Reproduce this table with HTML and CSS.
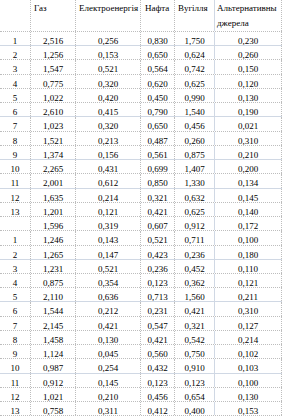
FILE: index.html
```html
<!DOCTYPE html>
<html>
<head>
<meta charset="utf-8">
<link rel="stylesheet" href="styles.css">
</head>
<body>
<div class="sheet">
  <div class="row head">
    <div class="c a"></div>
    <div class="c b h">Газ</div>
    <div class="c h">Електроенергія</div>
    <div class="c h hd">Нафта</div>
    <div class="c h">Вугілля</div>
    <div class="c f h">Альтернативны джерела</div>
  </div>
  <div class="row s"><div class="c a">1</div><div class="c b">2,516</div><div class="c">0,256</div><div class="c">0,830</div><div class="c">1,750</div><div class="c f">0,230</div></div>
  <div class="row"><div class="c a">2</div><div class="c b">1,256</div><div class="c">0,153</div><div class="c">0,650</div><div class="c">0,624</div><div class="c f">0,260</div></div>
  <div class="row"><div class="c a">3</div><div class="c b">1,547</div><div class="c">0,521</div><div class="c">0,564</div><div class="c">0,742</div><div class="c f">0,150</div></div>
  <div class="row"><div class="c a">4</div><div class="c b">0,775</div><div class="c">0,320</div><div class="c">0,620</div><div class="c">0,625</div><div class="c f">0,120</div></div>
  <div class="row"><div class="c a">5</div><div class="c b">1,022</div><div class="c">0,420</div><div class="c">0,450</div><div class="c">0,990</div><div class="c f">0,130</div></div>
  <div class="row s"><div class="c a">6</div><div class="c b">2,610</div><div class="c">0,415</div><div class="c">0,790</div><div class="c">1,540</div><div class="c f">0,190</div></div>
  <div class="row"><div class="c a">7</div><div class="c b">1,023</div><div class="c">0,320</div><div class="c">0,650</div><div class="c">0,456</div><div class="c f">0,021</div></div>
  <div class="row"><div class="c a">8</div><div class="c b">1,521</div><div class="c">0,213</div><div class="c">0,487</div><div class="c">0,260</div><div class="c f">0,310</div></div>
  <div class="row s"><div class="c a">9</div><div class="c b">1,374</div><div class="c">0,156</div><div class="c">0,561</div><div class="c">0,875</div><div class="c f">0,210</div></div>
  <div class="row"><div class="c a">10</div><div class="c b">2,265</div><div class="c">0,431</div><div class="c">0,699</div><div class="c">1,407</div><div class="c f">0,200</div></div>
  <div class="row s"><div class="c a">11</div><div class="c b">2,001</div><div class="c">0,612</div><div class="c">0,850</div><div class="c">1,330</div><div class="c f">0,134</div></div>
  <div class="row"><div class="c a">12</div><div class="c b">1,635</div><div class="c">0,214</div><div class="c">0,321</div><div class="c">0,632</div><div class="c f">0,145</div></div>
  <div class="row"><div class="c a">13</div><div class="c b">1,201</div><div class="c">0,121</div><div class="c">0,421</div><div class="c">0,625</div><div class="c f">0,140</div></div>
  <div class="row"><div class="c a"></div><div class="c b">1,596</div><div class="c">0,319</div><div class="c">0,607</div><div class="c">0,912</div><div class="c f">0,172</div></div>
  <div class="row"><div class="c a">1</div><div class="c b">1,246</div><div class="c">0,143</div><div class="c">0,521</div><div class="c">0,711</div><div class="c f">0,100</div></div>
  <div class="row s"><div class="c a">2</div><div class="c b">1,265</div><div class="c">0,147</div><div class="c">0,423</div><div class="c">0,236</div><div class="c f">0,180</div></div>
  <div class="row"><div class="c a">3</div><div class="c b">1,231</div><div class="c">0,521</div><div class="c">0,236</div><div class="c">0,452</div><div class="c f">0,110</div></div>
  <div class="row"><div class="c a">4</div><div class="c b">0,875</div><div class="c">0,354</div><div class="c">0,123</div><div class="c">0,362</div><div class="c f">0,121</div></div>
  <div class="row s"><div class="c a">5</div><div class="c b">2,110</div><div class="c">0,636</div><div class="c">0,713</div><div class="c">1,560</div><div class="c f">0,211</div></div>
  <div class="row"><div class="c a">6</div><div class="c b">1,544</div><div class="c">0,212</div><div class="c">0,231</div><div class="c">0,421</div><div class="c f">0,310</div></div>
  <div class="row"><div class="c a">7</div><div class="c b">2,145</div><div class="c">0,421</div><div class="c">0,547</div><div class="c">0,321</div><div class="c f">0,127</div></div>
  <div class="row"><div class="c a">8</div><div class="c b">1,458</div><div class="c">0,130</div><div class="c">0,421</div><div class="c">0,542</div><div class="c f">0,214</div></div>
  <div class="row"><div class="c a">9</div><div class="c b">1,124</div><div class="c">0,045</div><div class="c">0,560</div><div class="c">0,750</div><div class="c f">0,102</div></div>
  <div class="row s"><div class="c a">10</div><div class="c b">0,987</div><div class="c">0,254</div><div class="c">0,432</div><div class="c">0,910</div><div class="c f">0,103</div></div>
  <div class="row"><div class="c a">11</div><div class="c b">0,912</div><div class="c">0,145</div><div class="c">0,123</div><div class="c">0,123</div><div class="c f">0,100</div></div>
  <div class="row"><div class="c a">12</div><div class="c b">1,021</div><div class="c">0,210</div><div class="c">0,456</div><div class="c">0,654</div><div class="c f">0,130</div></div>
  <div class="row"><div class="c a">13</div><div class="c b">0,758</div><div class="c">0,311</div><div class="c">0,412</div><div class="c">0,400</div><div class="c f">0,153</div></div>
</div>
</body>
</html>
```

FILE: styles.css
```css
html, body {
  margin: 0;
  padding: 0;
  background: #ffffff;
}
body {
  font-family: "Liberation Serif", "Times New Roman", serif;
  font-size: 9px;
  color: #000000;
  overflow: hidden;
}
.sheet {
  display: flex;
  flex-direction: column;
  width: 282px;
}
.row {
  display: grid;
  grid-template-columns: 31px 45px 65px 34px 40px 67px;
  height: 14.24px;
  box-sizing: border-box;
  border-bottom: 1px dotted #bdbdbd;
}
.row.s {
  border-bottom: 1px solid #d0d8e4;
}
.row.head {
  height: 32px;
}
.c {
  box-sizing: border-box;
  border-right: 1px dotted #bdbdbd;
  text-align: center;
  line-height: 14px;
  padding-top: 2px;
  white-space: nowrap;
  overflow: hidden;
}
.row .c:nth-child(5) {
  border-right: 1px solid #d0d8e4;
}
.h {
  text-align: left;
  padding-left: 3px;
  padding-top: 1px;
  line-height: 15px;
}
.hd {
  padding-left: 4px;
}
.f.h {
  white-space: normal;
  padding-left: 2px;
}
```
